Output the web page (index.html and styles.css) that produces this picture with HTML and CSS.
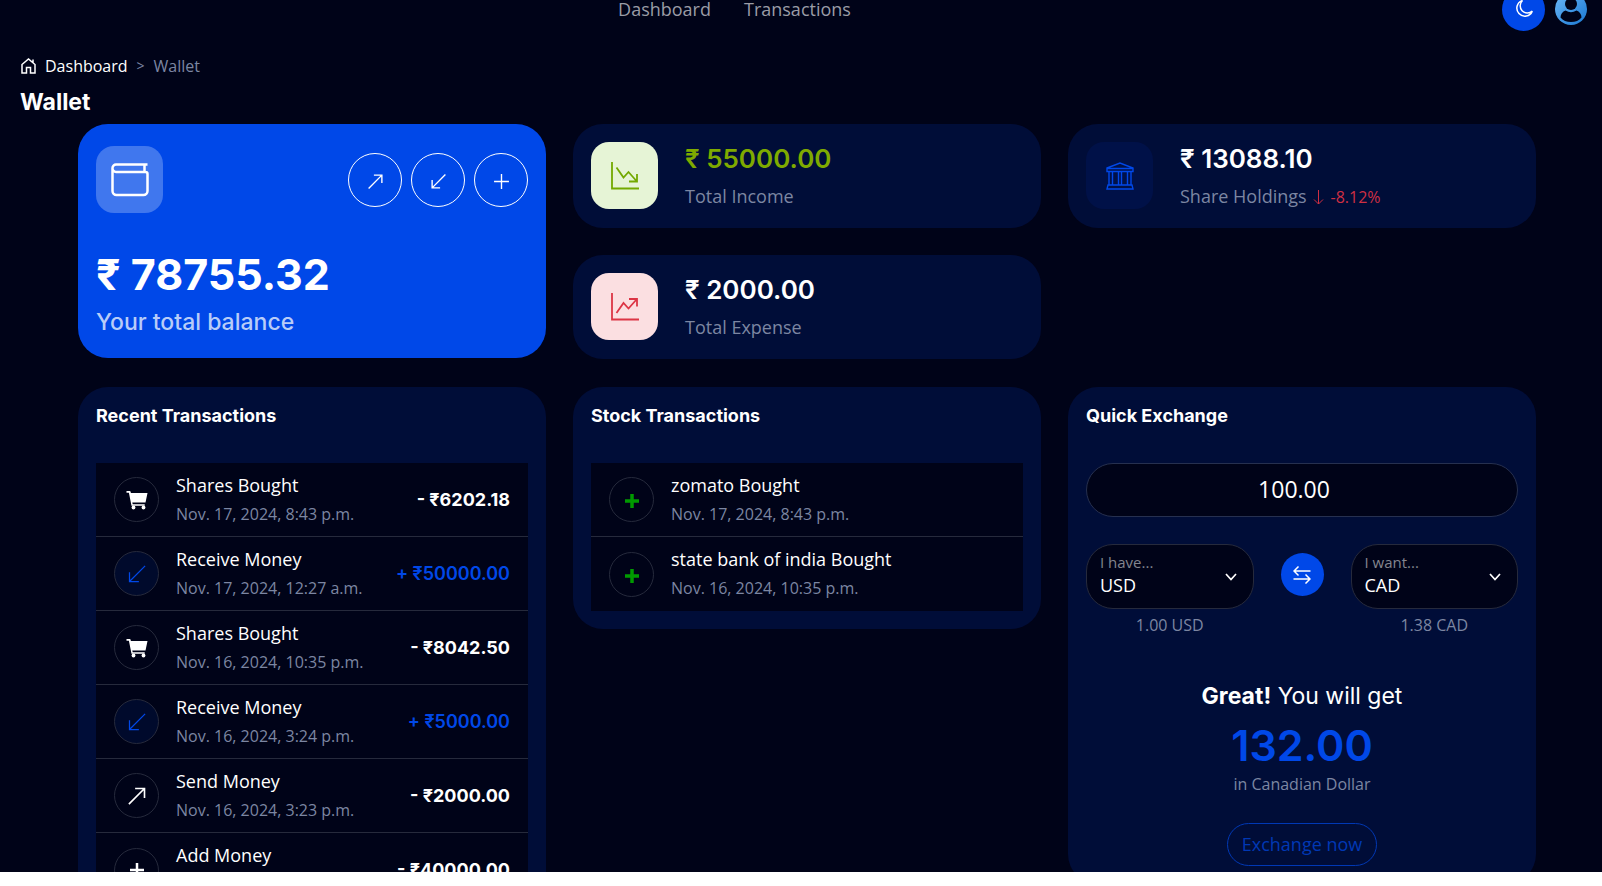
FILE: index.html
```html
<!DOCTYPE html>
<html lang="en">
<head>
  <meta charset="UTF-8">
  <meta name="viewport" content="width=device-width, initial-scale=1.0">
  <title>Wallet</title>
  <link rel="stylesheet" href="styles.css">
</head>
<body>
  <!-- Shared icons -->
  <svg class="sprite" aria-hidden="true">
    <symbol id="arrow-up" viewBox="0 0 16 16"><path d="M1.5 14.5 14 2M6.5 2H14v7.500"/></symbol>
    <symbol id="arrow-down" viewBox="0 0 16 16"><path d="M14.500 1.500 2 14M2 6.500V14h7.500"/></symbol>
    <symbol id="plus" viewBox="0 0 16 16"><path d="M8 1v14M1 8h14"/></symbol>
    <symbol id="cart" viewBox="0 0 22 20"><path fill="currentColor" stroke="none" d="M.5 1h3.300c.4 0 .7.300.8.700l.3 1.300h16.600L19.500 12.500H6.300l.4 1.700h12v1.600H5.500L2.900 2.700H.5z"/><circle cx="7.500" cy="17.500" r="1.900" fill="currentColor" stroke="none"/><circle cx="17.500" cy="17.500" r="1.900" fill="currentColor" stroke="none"/></symbol>
  </svg>

  <div class="page">
    <header>
      <nav>
        <a href="#">Dashboard</a>
        <a href="#">Transactions</a>
      </nav>
      <div class="header-actions">
        <button class="theme-btn" aria-label="Toggle dark mode">
          <svg width="20" height="20" viewBox="0 0 20 20"><path d="M8.500 1.500a8 8 0 1 0 9.800 10.600A7.200 7.200 0 0 1 8.500 1.500z"/></svg>
        </button>
        <a href="#" class="avatar" aria-label="Profile">
          <svg width="32" height="32" viewBox="0 0 32 32">
            <defs><linearGradient id="av" x1="0" y1="0" x2="1" y2="1"><stop offset="0" stop-color="#6db9f8"/><stop offset="1" stop-color="#1877d2"/></linearGradient></defs>
            <circle cx="16" cy="16" r="16" fill="url(#av)"/>
            <circle cx="16" cy="11" r="6" fill="#000318"/>
            <path d="M10.500 17.500q5.500 3.500 11 0c3 1 5 4 5 7-2.500 3-6 4.500-10.500 4.500S8 27.500 5.500 24.500c0-3 2-6 5-7z" fill="#000318"/>
          </svg>
        </a>
      </div>
    </header>

    <div class="breadcrumb">
      <svg width="15" height="16" viewBox="0 0 15 16"><path d="M1 6.500 7.500 1 14 6.500V15H9.500V9.500h-4V15H1zM12 4.500V1.500"/></svg>
      <a href="#">Dashboard</a>
      <span class="sep">&gt;</span>
      <span>Wallet</span>
    </div>
    <h1>Wallet</h1>

    <main>
      <section class="card balance">
        <div class="balance-top">
          <div class="tile tile-wallet">
            <svg width="38" height="34" viewBox="0 0 38 34"><path d="M36.500 1.500H5A3.500 3.500 0 0 0 1.500 5v23A4 4 0 0 0 5.500 32h27a4 4 0 0 0 4-4V11a2 2 0 0 0-2-2H5a3.500 3.500 0 0 1-3.500-3.500M33.500 1.500V9"/></svg>
          </div>
          <div class="balance-btns">
            <button class="round-btn" aria-label="Send"><svg width="17" height="17"><use href="#arrow-up"/></svg></button>
            <button class="round-btn" aria-label="Receive"><svg width="17" height="17"><use href="#arrow-down"/></svg></button>
            <button class="round-btn" aria-label="Add"><svg width="17" height="17"><use href="#plus"/></svg></button>
          </div>
        </div>
        <div class="balance-amount">₹ 78755.32</div>
        <div class="balance-label">Your total balance</div>
      </section>

      <div class="stack">
        <section class="card stat">
          <div class="tile tile-green">
            <svg width="28" height="28" viewBox="0 0 28 28"><path d="M1 0v26.500h27M5.500 5.500l7 10 5-5.500 8 9M18 19.500h8V12"/></svg>
          </div>
          <div>
            <div class="stat-amount green">₹ 55000.00</div>
            <div class="stat-label">Total Income</div>
          </div>
        </section>
        <section class="card stat">
          <div class="tile tile-red">
            <svg width="28" height="28" viewBox="0 0 28 28"><path d="M1 0v26.500h27M5.500 20l7-10 5 5.500 8-9M18 6h8v7.500"/></svg>
          </div>
          <div>
            <div class="stat-amount">₹ 2000.00</div>
            <div class="stat-label">Total Expense</div>
          </div>
        </section>
      </div>

      <div class="stack">
        <section class="card stat">
          <div class="tile tile-blue">
            <svg width="28" height="28" viewBox="0 0 28 28"><path d="M1 6 14 1l13 5v3.500H1zM1 6.500h26M3 9.500V23M6.500 9.500V23M12.500 9.500V23M15.500 9.500V23M21.500 9.500V23M25 9.500V23M2 23h24l1 4H1z"/></svg>
          </div>
          <div>
            <div class="stat-amount">₹ 13088.10</div>
            <div class="stat-label">Share Holdings <span class="change"><svg width="11" height="15" viewBox="0 0 11 15"><path d="M5.500 0v14M1 9.500l4.500 4.500L10 9.500"/></svg> -8.12%</span></div>
          </div>
        </section>
      </div>

      <section class="card">
        <h2>Recent Transactions</h2>
        <ul class="list">
          <li>
            <span class="icon"><svg width="22" height="20"><use href="#cart"/></svg></span>
            <div class="info"><div class="name">Shares Bought</div><div class="date">Nov. 17, 2024, 8:43 p.m.</div></div>
            <div class="amount">- ₹6202.18</div>
          </li>
          <li>
            <span class="icon in"><svg width="20" height="20"><use href="#arrow-down"/></svg></span>
            <div class="info"><div class="name">Receive Money</div><div class="date">Nov. 17, 2024, 12:27 a.m.</div></div>
            <div class="amount in">+ ₹50000.00</div>
          </li>
          <li>
            <span class="icon"><svg width="22" height="20"><use href="#cart"/></svg></span>
            <div class="info"><div class="name">Shares Bought</div><div class="date">Nov. 16, 2024, 10:35 p.m.</div></div>
            <div class="amount">- ₹8042.50</div>
          </li>
          <li>
            <span class="icon in"><svg width="20" height="20"><use href="#arrow-down"/></svg></span>
            <div class="info"><div class="name">Receive Money</div><div class="date">Nov. 16, 2024, 3:24 p.m.</div></div>
            <div class="amount in">+ ₹5000.00</div>
          </li>
          <li>
            <span class="icon out"><svg width="20" height="20"><use href="#arrow-up"/></svg></span>
            <div class="info"><div class="name">Send Money</div><div class="date">Nov. 16, 2024, 3:23 p.m.</div></div>
            <div class="amount">- ₹2000.00</div>
          </li>
          <li>
            <span class="icon add"><svg width="16" height="16"><use href="#plus"/></svg></span>
            <div class="info"><div class="name">Add Money</div><div class="date">Nov. 16, 2024, 3:20 p.m.</div></div>
            <div class="amount">- ₹40000.00</div>
          </li>
        </ul>
      </section>

      <section class="card">
        <h2>Stock Transactions</h2>
        <ul class="list">
          <li>
            <span class="icon buy"><svg width="16" height="16"><use href="#plus"/></svg></span>
            <div class="info"><div class="name">zomato Bought</div><div class="date">Nov. 17, 2024, 8:43 p.m.</div></div>
          </li>
          <li>
            <span class="icon buy"><svg width="16" height="16"><use href="#plus"/></svg></span>
            <div class="info"><div class="name">state bank of india Bought</div><div class="date">Nov. 16, 2024, 10:35 p.m.</div></div>
          </li>
        </ul>
      </section>

      <section class="card">
        <h2>Quick Exchange</h2>
        <form class="exchange">
          <input class="amount-input" type="text" value="100.00" aria-label="Amount">
          <div class="currencies">
            <div class="currency">
              <div class="field">
                <label for="have">I have...</label>
                <select id="have"><option>USD</option><option>CAD</option></select>
                <svg width="12" height="8" viewBox="0 0 12 8"><path d="M1 1l5 5.500L11 1"/></svg>
              </div>
              <p>1.00 USD</p>
            </div>
            <button type="button" class="swap-btn" aria-label="Swap">
              <svg width="18" height="18" viewBox="0 0 18 18"><path d="M17.500 5H1M5.500 .5 1 5l4.500 4.500M.5 13H17M12.500 8.500 17 13l-4.500 4.500"/></svg>
            </button>
            <div class="currency">
              <div class="field">
                <label for="want">I want...</label>
                <select id="want"><option>CAD</option><option>USD</option></select>
                <svg width="12" height="8" viewBox="0 0 12 8"><path d="M1 1l5 5.500L11 1"/></svg>
              </div>
              <p>1.38 CAD</p>
            </div>
          </div>
          <div class="great"><b>Great!</b> You will get</div>
          <div class="result">132.00</div>
          <p>in Canadian Dollar</p>
          <button type="button" class="exchange-btn">Exchange now</button>
        </form>
      </section>
    </main>
  </div>
</body>
</html>
```
FILE: styles.css
```css
:root {
  --bg: #000318;
  --card: #000d38;
  --primary: #0048e8;
  --text: #fff;
  --muted: #7c86a2;
  --line: #262a3c;
  --head-font: Inter, 'Open Sans', sans-serif;
}
* { box-sizing: border-box; }
body {
  margin: 0;
  background: #fff;
  color: var(--text);
  font-family: 'Open Sans', sans-serif;
  font-size: 16px;
  line-height: 24px;
}
a { color: inherit; text-decoration: none; }
button { font-family: inherit; cursor: pointer; padding: 0; }
h1, h2, p, ul { margin: 0; padding: 0; }
svg {
  fill: none;
  stroke: currentColor;
  display: block;
}
.sprite { display: none; }
.page {
  height: calc(100vh - 14px);
  overflow: hidden;
  background: var(--bg);
}
header {
  height: 64px;
  margin-top: -23px;
  padding: 0 15px;
  display: grid;
  grid-template-columns: 1fr auto;
  align-items: center;
}
nav {
  display: flex;
  justify-content: center;
  gap: 33px;
  font-size: 18px;
  color: #9a9ca6;
  padding-right: 48px;
}
.header-actions {
  display: flex;
  align-items: center;
  gap: 10px;
}
.theme-btn, .swap-btn {
  width: 43px;
  height: 43px;
  border: none;
  border-radius: 50%;
  background: var(--primary);
  color: #fff;
  display: flex;
  align-items: center;
  justify-content: center;
}
.theme-btn svg { stroke-width: 1.5; }
.avatar svg { stroke: none; }
.breadcrumb {
  padding: 13px 21px 0;
  display: flex;
  align-items: center;
  gap: 9px;
  color: var(--muted);
}
.breadcrumb svg { color: #fff; stroke-width: 1.5; }
.breadcrumb a { color: #fff; font-weight: 500; }
.sep { font-size: 14px; }
h1 {
  padding: 9px 20px 7px;
  font-family: var(--head-font);
  font-size: 23px;
  line-height: 30px;
  font-weight: 700;
}
main {
  padding: 0 66px 27px 78px;
  display: grid;
  grid-template-columns: repeat(3, 1fr);
  gap: 28px 27px;
  align-items: start;
}
.card {
  background: var(--card);
  border-radius: 30px;
  padding: 18px;
}
.stack {
  display: grid;
  gap: 27px;
}
.tile {
  width: 67px;
  height: 67px;
  border-radius: 18px;
  display: flex;
  align-items: center;
  justify-content: center;
  flex-shrink: 0;
}
.tile-wallet { background: #4077ee; }
.tile-wallet svg { stroke-width: 2.5; }
.tile-green { background: #e6f4d6; color: #73a900; }
.tile-red { background: #fbdfe1; color: #dc3545; }
.tile-green svg, .tile-red svg { stroke-width: 1.8; }
.tile-blue { background: #001148; color: var(--primary); }
.tile-blue svg { stroke-width: 1.4; }

/* Balance */
.balance {
  background: var(--primary);
  padding: 22px 18px;
  height: 234px;
}
.balance-top {
  display: flex;
  align-items: center;
  justify-content: space-between;
}
.balance-btns { display: flex; gap: 9px; }
.round-btn {
  width: 54px;
  height: 54px;
  padding-top: 3px;
  border: 1px solid #fff;
  border-radius: 50%;
  background: none;
  color: #fff;
  display: flex;
  align-items: center;
  justify-content: center;
}
.round-btn svg { stroke-width: 1.3; }
.balance-amount {
  margin-top: 34px;
  font-family: var(--head-font);
  font-size: 43px;
  line-height: 54px;
  font-weight: 700;
}
.balance-label {
  margin-top: 6px;
  font-family: var(--head-font);
  font-size: 23px;
  line-height: 30px;
  font-weight: 500;
  color: #b8ccf8;
}

/* Stats */
.stat {
  display: flex;
  gap: 27px;
  height: 104px;
}
.stat-amount {
  font-family: var(--head-font);
  font-size: 26px;
  line-height: 34px;
  font-weight: 600;
}
.stat-label {
  margin-top: 7px;
  font-size: 18px;
  line-height: 27px;
  color: var(--muted);
}
.green { color: #7faa00; }
.change { color: #cf2f43; font-size: 16px; }
.change svg { display: inline-block; vertical-align: -2px; margin: 0 2px; }

/* Lists */
h2 {
  font-family: var(--head-font);
  font-size: 18px;
  line-height: 22px;
  font-weight: 700;
  margin-bottom: 36px;
}
.list {
  list-style: none;
  background: var(--bg);
}
.list li {
  height: 74px;
  padding: 0 18px;
  display: flex;
  align-items: center;
  gap: 17px;
  border-bottom: 1px solid var(--line);
}
.list li:last-child { border-bottom: none; }
.icon {
  width: 45px;
  height: 45px;
  border: 1px solid var(--line);
  border-radius: 50%;
  display: flex;
  align-items: center;
  justify-content: center;
}
.icon.in { background: #000a2c; color: var(--primary); }
.icon.out svg { stroke-width: 1.3; }
.icon.add svg { stroke-width: 2.5; }
.icon.buy { color: #009a00; padding-top: 3px; }
.icon.buy svg { stroke-width: 3.5; }
.info { flex: 1; padding-top: 2px; }
.name { font-size: 18px; line-height: 27px; font-weight: 500; }
.date { line-height: 31px; color: var(--muted); }
.amount {
  font-family: var(--head-font);
  font-size: 18px;
  font-weight: 700;
}
.amount.in { color: var(--primary); font-weight: 600; }

/* Quick exchange */
.exchange {
  display: flex;
  flex-direction: column;
  align-items: center;
  text-align: center;
}
.exchange p { color: var(--muted); }
.amount-input {
  width: 100%;
  height: 54px;
  padding: 0 18px 2px 2px;
  border: 1px solid #26304f;
  border-radius: 27px;
  background: var(--bg);
  color: #fff;
  font-family: inherit;
  font-size: 23px;
  text-align: center;
}
.currencies {
  width: 100%;
  margin-top: 27px;
  display: flex;
  gap: 27px;
}
.currency { flex: 1; }
.field { position: relative; margin-bottom: 4px; }
.field label {
  position: absolute;
  left: 14px;
  top: 6px;
  font-size: 15px;
  color: #83858e;
}
.field select {
  width: 100%;
  height: 65px;
  padding: 17px 13px 0;
  border: 1px solid var(--line);
  border-radius: 27px;
  background: var(--bg);
  color: #fff;
  font-family: inherit;
  font-size: 18px;
  appearance: none;
}
.field svg {
  position: absolute;
  right: 17px;
  top: 29px;
  stroke-width: 1.7;
  pointer-events: none;
}
.swap-btn { margin-top: 9px; }
.swap-btn svg { stroke-width: 1.5; }
.great {
  margin-top: 44px;
  font-family: var(--head-font);
  font-size: 23px;
  line-height: 30px;
}
.result {
  margin-top: 7px;
  font-family: var(--head-font);
  font-size: 43px;
  line-height: 54px;
  font-weight: 600;
  color: var(--primary);
}
.exchange-btn {
  margin-top: 27px;
  height: 43px;
  padding: 0 14px 2px;
  border: 1px solid #0038b4;
  border-radius: 22px;
  background: none;
  color: #0038b4;
  font-size: 18px;
}
@media (max-width: 1100px) {
  main { grid-template-columns: 1fr; padding: 0 20px 27px; }
}
```
